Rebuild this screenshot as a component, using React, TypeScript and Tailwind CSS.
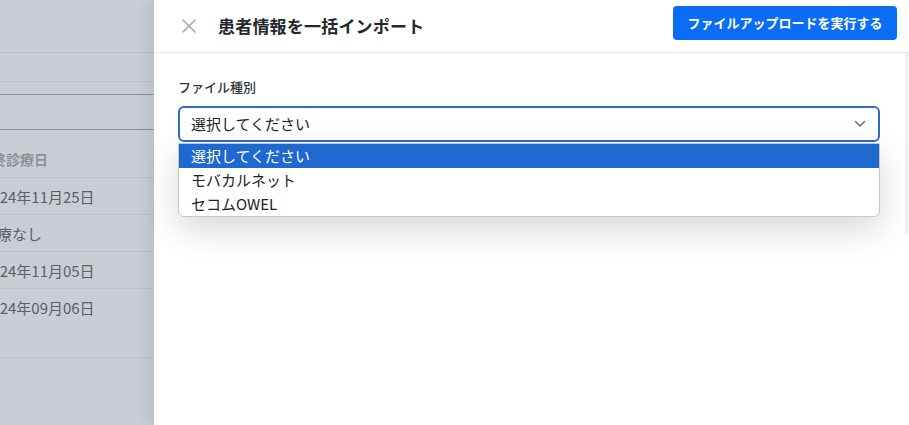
import React from "react";

const rows = [
  { text: "2024年11月25日", offset: "-ml-[17px]" },
  { text: "治療なし", offset: "-ml-[18px]" },
  { text: "2024年11月05日", offset: "-ml-[17px]" },
  { text: "2024年09月06日", offset: "-ml-[17px]" },
];

const options = ["選択してください", "モバカルネット", "セコムOWEL"];

const App: React.FC = () => {
  return (
    <main
      className="flex w-[909px] h-[425px] overflow-hidden bg-white"
      style={{ fontFamily: '"Noto Sans CJK JP", "Noto Sans", sans-serif' }}
    >
      {/* dimmed page behind the drawer */}
      <aside className="w-[154px] shrink-0 h-full bg-[#c9ced5] overflow-hidden text-[15px] text-[#5b6068]">
        <div className="h-[53px] border-b border-[#bec3ca]" />
        <div className="h-[29px] border-b border-[#bec3ca]" />
        <div className="h-[13px] border-b border-[#8e939b]" />
        <div className="h-[35px] border-b border-[#8e939b]" />
        <div className="h-[48px] flex items-start pt-[19px] leading-[20px] border-b border-[#bec3ca]">
          <span className="-ml-[22px] whitespace-nowrap text-[14px] font-semibold text-[#8c9198]">
            最終診療日
          </span>
        </div>
        {rows.map((row, i) => (
          <div
            key={i}
            className={`flex items-start pt-[8px] leading-[22px] border-b border-[#bec3ca] ${
              i === 3 ? "h-[69px]" : "h-[37px]"
            }`}
          >
            <span className={`${row.offset} whitespace-nowrap`}>{row.text}</span>
          </div>
        ))}
      </aside>

      {/* drawer */}
      <section className="flex-1 h-full bg-white flex flex-col shadow-[-6px_0_14px_rgba(0,0,0,0.08)]">
        <header className="h-[53px] shrink-0 flex items-center justify-between border-b border-[#e6e7e9] pl-7 pr-3">
          <div className="flex items-center">
            <svg width="14" height="14" viewBox="0 0 14 14" className="text-[#a3a6ab]">
              <path d="M1 1 L13 13 M13 1 L1 13" stroke="currentColor" strokeWidth="1.6" strokeLinecap="round" />
            </svg>
            <h1 className="ml-[22px] text-[17px] font-bold text-[#23272d] tracking-[0.2px]">
              患者情報を一括インポート
            </h1>
          </div>
          <button className="h-[34px] w-[224px] rounded-[4px] bg-[#0b6cf6] text-white text-[13px] font-bold mb-[6px]">
            ファイルアップロードを実行する
          </button>
        </header>

        <div className="flex flex-1">
          <div className="flex-1 pl-6 pr-[25px] pt-[24px]">
            <label className="block text-[13px] font-medium text-[#30343a] leading-[20px]">
              ファイル種別
            </label>
            <div className="mt-[9px] relative">
              <div className="h-[36px] flex items-center justify-between rounded-[6px] border-2 border-[#2f6bcc] pl-[11px] pr-[12px] text-[15px] text-[#222]">
                <span>選択してください</span>
                <svg width="12" height="8" viewBox="0 0 12 8" className="text-[#6b6f75]">
                  <path d="M1.5 1.5 L6 6 L10.5 1.5" fill="none" stroke="currentColor" strokeWidth="1.5" strokeLinecap="round" strokeLinejoin="round" />
                </svg>
              </div>
              <ul className="absolute left-0 right-0 top-[37px] bg-white rounded-b-[6px] border border-[#c4c7cc] overflow-hidden shadow-[0_12px_34px_rgba(0,0,0,0.16)] text-[15px] text-[#222]">
                {options.map((opt, i) => (
                  <li
                    key={opt}
                    className={`h-[24px] flex items-center pl-[12px] ${
                      i === 0 ? "bg-[#1f68cf] text-white" : ""
                    }`}
                  >
                    {opt}
                  </li>
                ))}
              </ul>
            </div>
          </div>
          <div className="w-[4px] h-[182px] bg-[#f0f1f2]" />
        </div>
      </section>
    </main>
  );
};

export default App;
